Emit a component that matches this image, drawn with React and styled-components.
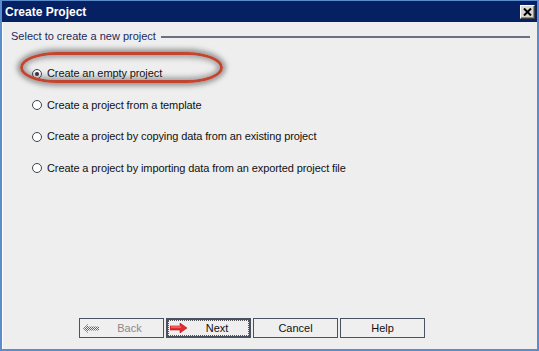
import React, { useState } from "react";
import styled, { createGlobalStyle } from "styled-components";

const GlobalStyle = createGlobalStyle`
  html, body { margin: 0; padding: 0; background: #eeeeee; }
  body { font-family: "Liberation Sans", Arial, sans-serif; font-size: 11px; }
  *, *::before, *::after { box-sizing: border-box; }
`;

const options = [
  "Create an empty project",
  "Create a project from a template",
  "Create a project by copying data from an existing project",
  "Create a project by importing data from an exported project file",
];

const App = () => {
  const [selected, setSelected] = useState(0);

  return (
    <>
      <GlobalStyle />
      <Window>
        <TitleBar>
          <Title>Create Project</Title>
          <CloseBtn aria-label="Close">
            <svg width="9" height="8" viewBox="0 0 9 8">
              <path d="M1 0.5 L8 7.5 M8 0.5 L1 7.5" stroke="#000" strokeWidth="2" />
            </svg>
          </CloseBtn>
        </TitleBar>

        <Body>
          <GroupHeader>
            <GroupLabel>Select to create a new project</GroupLabel>
            <GroupRule />
          </GroupHeader>

          <OptionList>
            {options.map((label, i) => (
              <Option key={label} $highlight={i === 0} onClick={() => setSelected(i)}>
                <Radio $checked={selected === i} />
                <OptionText>{label}</OptionText>
              </Option>
            ))}
          </OptionList>

          <Footer>
            <Button disabled $icon>
              <svg width="16" height="9" viewBox="0 0 16 9">
                <defs>
                  <pattern id="dots" width="2" height="2" patternUnits="userSpaceOnUse">
                    <rect width="1" height="1" fill="#e0303a" />
                    <rect x="1" y="1" width="1" height="1" fill="#e0303a" />
                  </pattern>
                </defs>
                <path d="M0 4.5 L5 0 L5 2.5 L16 2.5 L16 6.5 L5 6.5 L5 9 Z" fill="url(#dots)" />
              </svg>
              <ButtonLabel $disabled>Back</ButtonLabel>
            </Button>
            <Button $focused $icon>
              <svg width="17" height="10" viewBox="0 0 17 10">
                <path d="M0 3 L10 3 L10 0 L17 5 L10 10 L10 7 L0 7 Z" fill="#e52a2f" stroke="#b01018" strokeWidth="0.6" />
                <path d="M1 4 L11 4" stroke="#ff8a8a" strokeWidth="1" />
              </svg>
              <ButtonLabel>Next</ButtonLabel>
            </Button>
            <Button>
              <ButtonLabel>Cancel</ButtonLabel>
            </Button>
            <Button>
              <ButtonLabel>Help</ButtonLabel>
            </Button>
          </Footer>
        </Body>
      </Window>
    </>
  );
};

export default App;

/* --- Styled components --- */
const Window = styled.div`
  width: 539px; height: 351px; display: flex; flex-direction: column;
  border: 2px solid #5b8dcc; border-top-width: 1px; background: #eeeeee;
`;
const TitleBar = styled.div`
  height: 21px; flex-shrink: 0; display: flex; align-items: center; justify-content: space-between;
  background: #062064; padding: 0 2px 0 3px;
`;
const Title = styled.div`
  color: #fff; font-weight: 700; font-size: 12px;
`;
const CloseBtn = styled.button`
  width: 15px; height: 14px; padding: 0; display: flex; align-items: center; justify-content: center;
  background: #d8d6d0; border: 1px solid; border-color: #fff #404040 #404040 #fff;
  box-shadow: inset -1px -1px 0 #8a8a8a; cursor: default;
`;
const Body = styled.div`
  flex: 1; display: flex; flex-direction: column; border-left: 1px solid #fff;
  padding: 8px 7px 0 8px;
`;
const GroupHeader = styled.div`
  display: flex; align-items: center; gap: 5px;
`;
const GroupLabel = styled.div`
  color: #1d2a5a; font-size: 11px; line-height: 13px; white-space: nowrap;
`;
const GroupRule = styled.div`
  flex: 1; height: 2px; background: #6b7082;
`;
const OptionList = styled.div`
  display: flex; flex-direction: column; gap: 18.6px; padding: 24px 0 0 21px;
`;
const Option = styled.label`
  position: relative; display: flex; align-items: center; gap: 5px; height: 13px; cursor: default;
  ${p => p.$highlight && `
    &::before {
      content: ""; position: absolute; left: -12px; top: -15px; width: 203px; height: 31px;
      border: 3px solid #c2452f; border-radius: 36px / 50%;
      box-shadow: 0 0 5px 3px rgba(80,80,80,0.55), inset 0 0 5px 3px rgba(80,80,80,0.45);
    }
  `}
`;
const Radio = styled.span`
  width: 10px; height: 10px; border-radius: 50%; border: 1px solid #3c4452; background: #fff;
  display: flex; align-items: center; justify-content: center; flex-shrink: 0;
  &::after {
    content: ""; width: 4px; height: 4px; border-radius: 50%;
    background: ${p => (p.$checked ? "#2a3040" : "transparent")};
  }
`;
const OptionText = styled.span`
  color: #111; font-size: 11px; line-height: 13px; white-space: nowrap; letter-spacing: -0.1px;
`;
const Footer = styled.div`
  margin-top: auto; margin-bottom: 11px; padding-left: 68px; display: flex; gap: 2px;
`;
const Button = styled.button`
  width: 85px; height: 20px; padding: 0 3px; display: flex; align-items: center;
  justify-content: ${p => (p.$icon ? "flex-start" : "center")};
  background: #efefef; border: 1px solid #4a5262; font-family: inherit; font-size: 11px;
  color: #111; cursor: default;
  ${p => p.$focused && `outline: 1px dotted #555; outline-offset: -3px; border-width: 2px; padding: 0 2px;`}
`;
const ButtonLabel = styled.span`
  flex: 1; text-align: center; color: ${p => (p.$disabled ? "#8a8a8a" : "#111")};
`;
